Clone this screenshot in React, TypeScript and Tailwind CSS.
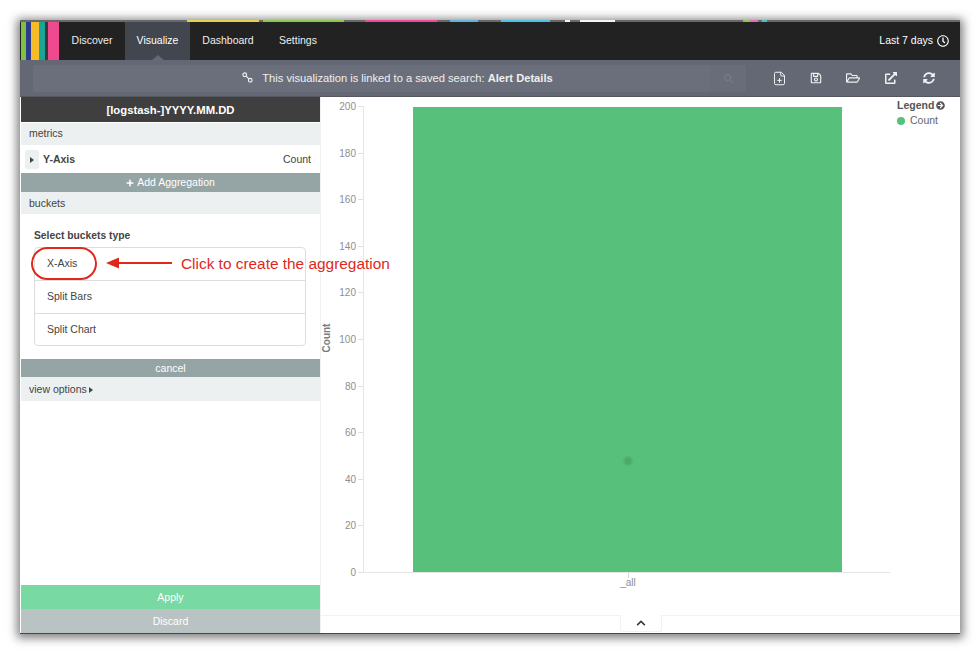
import { FaArrowCircleRight, FaChevronUp, FaExternalLinkAlt, FaPlus, FaRegClock, FaRegFolderOpen, FaRegSave, FaSearch, FaSyncAlt } from "react-icons/fa";
import { FilePlus } from "lucide-react";

const stripes = [
    "w-[5px] bg-[#7fc241]",
    "w-[5px] bg-[#2c3c8c]",
    "w-[8px] bg-[#f5bb28]",
    "w-[6px] bg-[#1ba598]",
    "w-[3px] bg-[#3a3a3a]",
    "w-[11px] bg-[#f04a8f]",
];

const topStrip = [
    { w: "w-[167px]", c: "" },
    { w: "w-[72px]", c: "bg-[#e8d04a]" },
    { w: "w-[4px]", c: "" },
    { w: "w-[81px]", c: "bg-[#8cc84b]" },
    { w: "w-[21px]", c: "" },
    { w: "w-[72px]", c: "bg-[#f04a9f]" },
    { w: "w-[13px]", c: "" },
    { w: "w-[28px]", c: "bg-[#5fb4d8]" },
    { w: "w-[23px]", c: "" },
    { w: "w-[49px]", c: "bg-[#4fc0e8]" },
    { w: "w-[15px]", c: "" },
    { w: "w-[5px]", c: "bg-[#f4f4f4]" },
    { w: "w-[10px]", c: "" },
    { w: "w-[35px]", c: "bg-[#f4f4f4]" },
    { w: "w-[128px]", c: "" },
    { w: "w-[7px]", c: "bg-[#8cc84b]" },
    { w: "w-[8px]", c: "bg-[#e86ab0]" },
    { w: "w-[4px]", c: "" },
    { w: "w-[5px]", c: "bg-[#4fc0c8]" },
];

const yTicks = [200, 180, 160, 140, 120, 100, 80, 60, 40, 20, 0];

function Chart() {
    return (
        <svg viewBox="320 97 640 518" className="block w-[640px] h-[518px]">
            <rect x="413" y="107" width="429" height="465" fill="#57c17b" />
            <circle cx="628" cy="461" r="5" fill="#4fb373" />
            <circle cx="628" cy="461" r="3" fill="#4aa96b" />
            <line x1="363.5" y1="106" x2="363.5" y2="572" stroke="#e6e6e6" strokeWidth="1" />
            <line x1="363" y1="572.5" x2="890" y2="572.5" stroke="#e6e6e6" strokeWidth="1" />
            <line x1="628.5" y1="572" x2="628.5" y2="578" stroke="#d8d8d8" strokeWidth="1" />
            {yTicks.map((t, i) => {
                const y = Math.round(106 + i * 46.6);
                return (
                    <g key={t}>
                        <line x1="358" y1={y + 0.5} x2="363" y2={y + 0.5} stroke="#e0e0e0" strokeWidth="1" />
                        <text x="356" y={y + 3.5} textAnchor="end" fontSize="10" fill="#8a8f93">
                            {t}
                        </text>
                    </g>
                );
            })}
            <text x="628" y="586" textAnchor="middle" fontSize="10" fill="#8a8f93">
                _all
            </text>
            <text x="330" y="338" textAnchor="middle" fontSize="10" fontWeight="700" fill="#777c80" transform="rotate(-90 330 338)">
                Count
            </text>
        </svg>
    );
}

function NavTab({ label, active, w }: { label: string; active?: boolean; w: string }) {
    return (
        <div className={`relative flex items-center justify-center h-full ${w} ${active ? "bg-[#41464f]" : ""}`}>
            <span className={active ? "text-white" : "text-[#eeeeee]"}>{label}</span>
            {active && (
                <div className="absolute bottom-0 left-1/2 -ml-[6px] w-0 h-0 border-x-[6px] border-x-transparent border-b-[5px] border-b-[#646874]"></div>
            )}
        </div>
    );
}

function SectionLabel({ children, className }: { children: React.ReactNode; className?: string }) {
    return <div className={`h-[22px] pl-[8px] flex items-center bg-[#ecf0f1] text-[#444444] ${className ?? ""}`}>{children}</div>;
}

function GrayBar({ children, className }: { children: React.ReactNode; className: string }) {
    return <div className={`flex items-center justify-center text-white ${className}`}>{children}</div>;
}

export default function App() {
    return (
        <div className="w-[980px] h-[655px] bg-white pt-[21px] pl-[20px] overflow-hidden font-['Liberation_Sans',Arial,sans-serif] text-[10.5px]">
            <div className="relative w-[940px] h-[613px] flex flex-col bg-white shadow-[0_1px_9px_3px_rgba(0,0,0,0.5)]">
                {/* thin strip of the desktop showing behind the window */}
                <div className="relative flex h-[2px] -mt-[1px] bg-[#6a6a6a]">
                    {topStrip.map((s, i) => (
                        <div key={i} className={`${s.w} ${s.c}`}></div>
                    ))}
                </div>

                <div className="flex items-center h-[38px] bg-[#222222]">
                    <div className="flex h-full ml-[1px]">
                        {stripes.map((s) => (
                            <div key={s} className={s}></div>
                        ))}
                    </div>
                    <NavTab label="Discover" w="w-[66px]" />
                    <NavTab label="Visualize" active w="w-[65px]" />
                    <NavTab label="Dashboard" w="w-[76px]" />
                    <NavTab label="Settings" w="w-[64px]" />
                    <div className="ml-auto mr-[11px] flex items-center gap-[4px] text-white">
                        <span>Last 7 days</span>
                        <FaRegClock className="w-[12px] h-[12px]" />
                    </div>
                </div>

                <div className="flex items-center h-[37px] bg-[#646874] border-b border-[#55585f]">
                    <div className="flex items-center h-[27px] w-[713px] ml-[13px] rounded-[3px] bg-[#6b6f7b]">
                        <div className="flex-1 flex items-center justify-center gap-[9px] text-[#f0f0f0] pl-[52px]">
                            <svg viewBox="0 0 12 12" className="w-[11px] h-[11px]" fill="none" stroke="#f0f0f0" strokeWidth="1.3">
                                <circle cx="3" cy="3" r="2" />
                                <circle cx="9" cy="9" r="2" />
                                <line x1="4.5" y1="4.5" x2="7.5" y2="7.5" />
                            </svg>
                            <span className="text-[11.15px]">
                                This visualization is linked to a saved search: <b>Alert Details</b>
                            </span>
                        </div>
                        <div className="flex items-center justify-center w-[36px] h-full bg-[#696d79] rounded-r-[3px]">
                            <FaSearch className="w-[9px] h-[9px] text-[#777b86]" />
                        </div>
                    </div>
                    <div className="flex items-center ml-[15px] text-[#f0f0f0]">
                        <div className="w-[36px] flex justify-center">
                            <FilePlus size={15} strokeWidth={1.6} />
                        </div>
                        <div className="w-[37px] flex justify-center">
                            <FaRegSave className="w-[12px] h-[12px]" />
                        </div>
                        <div className="w-[37px] flex justify-center">
                            <FaRegFolderOpen className="w-[14px] h-[14px]" />
                        </div>
                        <div className="w-[39px] flex justify-center">
                            <FaExternalLinkAlt className="w-[12px] h-[12px]" />
                        </div>
                        <div className="w-[37px] flex justify-center">
                            <FaSyncAlt className="w-[12px] h-[12px]" />
                        </div>
                    </div>
                </div>

                <div className="flex flex-1 min-h-0">
                    <div className="flex flex-col w-[299px] ml-[1px] h-[536px] text-[#444444]">
                        <div className="flex items-center justify-center h-[25px] mb-[1px] bg-[#3f3f3f] text-white text-[11.3px] font-bold pt-[2px]">
                            [logstash-]YYYY.MM.DD
                        </div>
                        <SectionLabel>metrics</SectionLabel>
                        <div className="flex items-center h-[28px] pt-[1px] pl-[4px] pr-[9px]">
                            <div className="flex items-center justify-center w-[14px] h-[19px] mr-[4px] rounded-[2px] bg-[#ecf0f1]">
                                <div className="w-0 h-0 border-y-[3px] border-y-transparent border-l-[4px] border-l-[#444444]"></div>
                            </div>
                            <b>Y-Axis</b>
                            <span className="ml-auto">Count</span>
                        </div>
                        <GrayBar className="h-[19px] gap-[3px] bg-[#95a5a6]">
                            <FaPlus className="w-[8px] h-[8px]" />
                            <span>Add Aggregation</span>
                        </GrayBar>
                        <SectionLabel className="pt-[1px]">buckets</SectionLabel>
                        <div className="pl-[13px] pt-[16px] pr-[14px] h-[145px]">
                            <div className="h-[12px] leading-[12px] font-bold text-[10.3px] mb-[5px]">Select buckets type</div>
                            <div className="h-[99px] border border-[#dddddd] rounded-[4px] flex flex-col">
                                <div className="h-[32px] flex items-center pl-[12px]">X-Axis</div>
                                <div className="h-[33px] flex items-center pl-[12px] border-t border-[#dddddd]">Split Bars</div>
                                <div className="h-[32px] flex items-center pl-[12px] border-t border-[#dddddd]">Split Chart</div>
                            </div>
                        </div>
                        <GrayBar className="h-[18px] pt-[1px] bg-[#95a5a6]">cancel</GrayBar>
                        <div className="h-[24px] pl-[8px] pt-[1px] flex items-center gap-[2px] bg-[#ecf0f1]">
                            <span>view options</span>
                            <div className="w-0 h-0 border-y-[3px] border-y-transparent border-l-[4px] border-l-[#444444]"></div>
                        </div>
                        <div className="flex-1"></div>
                        <GrayBar className="h-[24px] pt-[1px] bg-[#78d9a2]">Apply</GrayBar>
                        <GrayBar className="h-[24px] pt-[1px] bg-[#b9c3c3]">Discard</GrayBar>
                    </div>

                    <div className="relative flex-1 min-w-0 border-l border-[#f0f0f0]">
                        <div className="-ml-[1px]">
                            <Chart />
                        </div>
                        {/* legend */}
                        <div className="absolute left-[576px] top-[2px]">
                            <div className="flex items-center gap-[2px] font-bold h-[13px] text-[#555555]">
                                Legend <FaArrowCircleRight className="w-[9px] h-[9px]" />
                            </div>
                            <div className="flex items-center gap-[5px] mt-[1px] text-[#666666]">
                                <div className="w-[8px] h-[8px] rounded-full bg-[#57c17b]"></div>
                                Count
                            </div>
                        </div>
                        {/* spy panel toggle */}
                        <div className="absolute left-0 right-0 top-[518px] border-t border-[#f0f3f3]"></div>
                        <div className="absolute left-[299px] top-[518px] flex items-center justify-center w-[42px] h-[17px] bg-white border-x border-b border-[#f0f3f3] rounded-b-[3px]">
                            <FaChevronUp className="w-[10px] h-[10px] text-[#3a3a3a]" />
                        </div>
                    </div>
                </div>

                <div className="absolute left-0 right-0 bottom-0 h-[1px] bg-[#4a4a2e]"></div>

                {/* callout drawn on top of the screenshot */}
                <div className="absolute left-[11px] top-[226px] w-[66px] h-[33px] rounded-[17px] border-[2.5px] border-[#e0281a]"></div>
                <svg viewBox="0 0 70 12" className="absolute left-[86px] top-[236px] w-[70px] h-[12px]">
                    <line x1="8" y1="6" x2="66" y2="6" stroke="#e0281a" strokeWidth="2.2" />
                    <polygon points="0,6 13,0.5 13,11.5" fill="#e0281a" />
                </svg>
                <div className="absolute left-[161px] top-[233px] text-[15.4px] leading-[20px] text-[#e0281a] whitespace-nowrap">
                    Click to create the aggregation
                </div>
            </div>
        </div>
    );
}
